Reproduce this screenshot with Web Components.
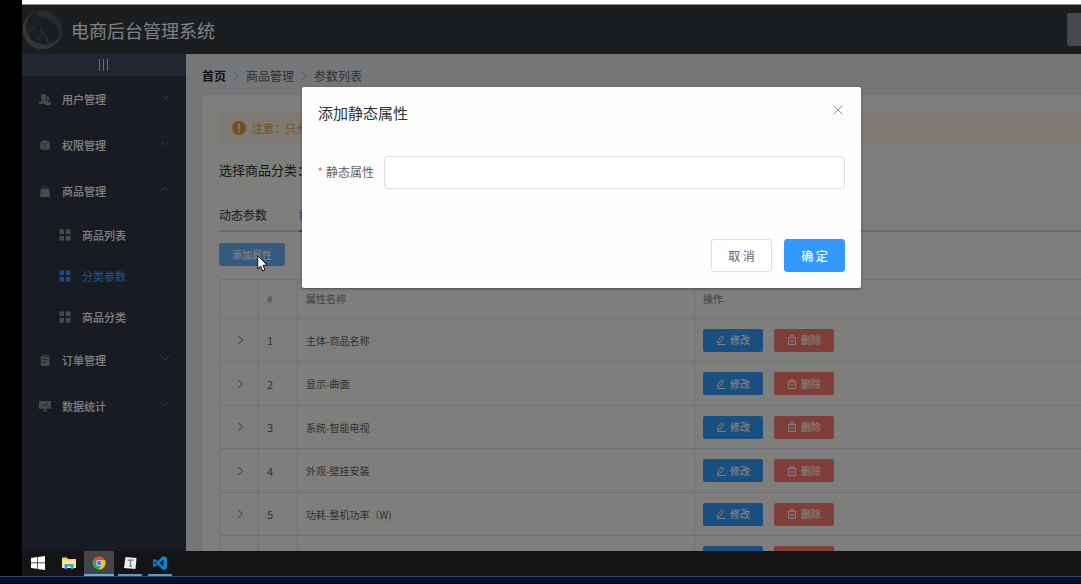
<!DOCTYPE html>
<html lang="zh-CN">
<head>
<meta charset="utf-8">
<title>电商后台管理系统</title>
<style>
html,body{margin:0;height:100%;background:#000}
body{font-family:"Noto Sans CJK SC","Noto Sans",sans-serif;font-size:12px;overflow:hidden}
</style>
</head>
<body>
<desktop-screen></desktop-screen>
<script>
const define = (name, css, html) => customElements.define(name, class extends HTMLElement {
  connectedCallback() {
    if (this.shadowRoot) return;
    const root = this.attachShadow({mode: 'open'});
    const body = typeof html === 'function' ? html(this) : html;
    root.innerHTML = `<style>*{box-sizing:border-box}button{font-family:inherit;cursor:pointer}${css}</style>${body}`;
  }
});

const icons = {
  user: '<path d="M5 1c2 0 3 1.400 3 3.200S7.200 7 6.500 7.800c0 .8.400 1 1.200 1.300L8 9.400V12H0c0-2 .6-2.400 3-3 .5-.2.6-.6.4-1.200C2.500 7 2 5.800 2 4.200 2 2.400 3 1 5 1z"/><path d="M8.300 3.200c1.600-.2 2.600.8 2.600 2.400 0 1.400-.6 2.300-1.200 2.800 0 .8.500 1 1.500 1.300 1.300.4 1.800 1 1.800 3.300H6.500l1-3.400c.8-.8 1.300-4 .8-6.400z"/>',
  box: '<path d="M1.300 3.200 6.500 1l5.200 2.200v7.200l-5.200 2-5.200-2z"/><path d="m1.600 3.700 4.900 1.800 4.900-1.800M6.500 5.500V12" fill="none" stroke="#333744" stroke-width=".6"/>',
  bag: '<path d="M2 4h9l1 9H1z"/><path d="M4 6V3.500C4 .8 9 .8 9 3.500V6" fill="none" stroke="currentColor"/>',
  grid: '<path d="M.5.500h5v5h-5zM7.500.500h5v5h-5zM.5 7.500h5v5h-5zM7.500 7.500h5v5h-5z"/>',
  order: '<path d="M2 2h2.500V.800h4V2H11v11H2z"/><path d="M4 2.800h5M4 6h5M4 9h3.500" stroke="#333744" stroke-width=".9"/>',
  chart: '<path d="M0 1h13v8.500H0zM6 9.500h1V13H6z"/><path d="M3.500 12.500 6.500 10l3 2.500" fill="none" stroke="currentColor"/><path d="m3 6.500 2-2L7 6l3-3M9 7h1.500" fill="none" stroke="#333744" stroke-width=".9"/>'
};

define('menu-item', `
:host{display:block}
button{display:flex;align-items:center;width:100%;height:46px;padding:0 16px 0 17px;border:0;background:none;color:#fff;font-size:11px;line-height:16px;font-weight:500;text-align:left}
svg.icon{width:12px;height:12px;margin-right:11px;color:#909399;fill:currentColor;flex:none}
span{flex:1}
svg.arrow{width:10px;height:6px;margin-bottom:4px;fill:none;stroke:#6d7177}
:host([open]) svg.arrow{transform:rotate(180deg)}
:host([sub]) button{height:41px;padding-left:37px}
:host([sub]) .arrow{display:none}
:host([current]) button,:host([current]) svg.icon{color:#329aff}
`, el => `<button><svg class="icon" viewBox="0 0 13 13" aria-hidden="true">${icons[el.getAttribute('icon')]}</svg><span><slot></slot></span><svg class="arrow" viewBox="0 0 10 6" aria-hidden="true"><path d="m1 1 4 4 4-4"/></svg></button><slot name="children"></slot>`);

define('side-menu', `
:host{display:block;background:#333744;width:164px;flex:none}
.toggle{display:block;width:100%;height:22px;border:0;padding:0;background:#434f62;line-height:0}
svg{width:10px;height:12px;stroke:#d9dde3;stroke-width:1}
`, `
<button class="toggle" aria-label="折叠菜单"><svg viewBox="0 0 10 12"><path d="M.5 0v12M4.500 0v12M8.500 0v12"/></svg></button>
<nav>
<menu-item icon="user">用户管理</menu-item>
<menu-item icon="box">权限管理</menu-item>
<menu-item icon="bag" open>商品管理
<menu-item slot="children" sub icon="grid">商品列表</menu-item>
<menu-item slot="children" sub icon="grid" current>分类参数</menu-item>
<menu-item slot="children" sub icon="grid">商品分类</menu-item>
</menu-item>
<menu-item icon="order">订单管理</menu-item>
<menu-item icon="chart">数据统计</menu-item>
</nav>`);

define('app-header', `
:host{display:flex;align-items:center;height:49px;flex:none;padding-right:14px;background:#373d41;color:#fff}
.logo{width:41px;height:41px;margin-right:8px}
h1{margin:0;font-size:18px;font-weight:400;flex:1}
button{width:59px;height:33px;border:0;border-radius:3px;background:#909399}
`, `
<svg class="logo" viewBox="0 0 41 41" aria-hidden="true">
<path d="M13 2C3 7-2 17 2 27s14 16 25 12c7-3 12-9 13-15-4 8-12 13-20 11C10 34 4 27 4 18 4 11 8 5 13 2z" fill="#666c70"/>
<path d="M14 3c5-2 12-2 17 2s9 9 9 15-1 10-4 14c2-8 1-14-2-19l-2 1 0-3-3 0 0-3-3 1-1-3-3 2-2-3-3 2z" fill="#50565a"/>
<path d="M6 28c0-6 3-9 8-11M19 18l1 7-5 6M20 24l5 5 1 5" fill="none" stroke="#666c70" stroke-width="1"/>
</svg>
<h1>电商后台管理系统</h1><button aria-label="退出"></button>`);

define('bread-crumb', `
:host{display:block}
ol{display:flex;align-items:center;gap:8px;margin:0;padding:0;list-style:none;height:18px;line-height:18px;font-size:12px;color:#606266}
li{display:flex;align-items:center;gap:8px}
a{color:inherit;text-decoration:none}
li:first-child a{color:#202226;font-weight:700}
svg{width:4px;height:8px;fill:none;stroke:#b4b8c0}
`, `
<ol><li><a href="#home">首页</a><svg viewBox="0 0 4 8"><path d="M0 0l4 4-4 4"/></svg></li>
<li><a href="#goods">商品管理</a><svg viewBox="0 0 4 8"><path d="M0 0l4 4-4 4"/></svg></li>
<li><span>参数列表</span></li></ol>`);

define('action-button', `
:host{display:inline-block}
button{display:flex;align-items:center;justify-content:center;gap:4px;width:60px;height:23px;border:0;border-radius:2px;padding:0;background:#34a0ff;color:#fff;font-size:10px;line-height:14px;font-weight:500}
:host([kind=danger]) button{background:#ff7c6e}
:host([kind=add]) button{width:66px;background:#66b4ff}
svg{width:10px;height:10px;fill:none;stroke:currentColor;stroke-width:1}
`, el => {
  const k = el.getAttribute('kind');
  const edit = '<svg viewBox="0 0 10 10"><path d="M1.500 8 2 5.500 5.500 1l2 1.500L4 7.500zM1 9.500h8.500"/></svg>';
  const del = '<svg viewBox="0 0 10 10"><path d="M.5 2.500h9M3.500 2V.500h3V2M1.500 2.500v7h7v-7M4 4.500v3M6 4.500v3"/></svg>';
  return `<button>${k === 'add' ? '' : k === 'danger' ? del : edit}<span><slot></slot></span></button>`;
});

const rows = ['主体-商品名称', '显示-曲面', '系统-智能电视', '外观-壁挂安装', '功耗-整机功率（W)', ''];
define('params-table', `
:host{display:block;margin-top:13px}
table{width:100%;table-layout:fixed;border-collapse:separate;border-spacing:0;border-top:1px solid #e2e5ef;border-left:1px solid #e2e5ef;font-size:10px;color:#606266}
th,td{height:43px;padding:0 0 0 8px;text-align:left;font-weight:400;border:0 solid #e2e5ef;border-width:0 1px 1px 0;white-space:nowrap}
tr:nth-child(even) td{height:44px}
th{height:39px;padding-bottom:2px;font-weight:500;color:#909399}
.c{width:39px}.n{width:397px}
td:nth-child(2){font-size:11px}
.expand{display:flex;width:24px;height:24px;padding:0;border:0;background:none;align-items:center;justify-content:center}
.expand svg{width:5px;height:8px;fill:none;stroke:#666}
.acts{display:flex;gap:11px}
`, `
<table><thead><tr><th class="c"></th><th class="c">#</th><th class="n">属性名称</th><th>操作</th></tr></thead>
<tbody>${rows.map((n, i) => `<tr><td><button class="expand" aria-label="展开"><svg viewBox="0 0 5 8"><path d="m.5 0 4 4-4 4"/></svg></button></td><td>${n && i + 1}</td><td>${n}</td><td><div class="acts"><action-button>${n && '修改'}</action-button><action-button kind="danger">${n && '删除'}</action-button></div></td></tr>`).join('')}</tbody></table>`);

define('params-page', `
:host{display:block;flex:1;min-width:0;padding:13px 16px 0;background:#eaedf1}
.card{margin-top:10px;padding:17px 17px 0;background:#fcfff9;border-radius:3px;box-shadow:0 1px 3px rgba(0,0,0,.12)}
.alert{display:flex;align-items:center;gap:6px;height:31px;padding:0 13px;border-radius:3px;background:#fdf3e4;color:#e6a23c;font-size:11px}
.alert svg{width:14px;height:14px}
.pick{margin:15px 0 0;height:24px;line-height:24px;font-size:13px;color:#303133}
.tabs{display:flex;gap:32px;height:33px;margin-top:17px;border-bottom:2px solid #d0d4dc}
.tabs button{padding:0;border:0;border-bottom:2px solid transparent;height:33px;background:none;font-size:12px;color:#303133}
.tabs button.on{color:#3a9cff;border-color:#3a9cff}
.add{margin-top:11px}
action-button{vertical-align:top}
`, `
<bread-crumb></bread-crumb>
<section class="card">
<div class="alert" role="alert"><svg viewBox="0 0 14 14"><circle cx="7" cy="7" r="7" fill="#e6a23c"/><path d="M7 2.500v6" stroke="#fdf3e4" stroke-width="2"/><circle cx="7" cy="10.800" r="1.100" fill="#fdf3e4"/></svg>注意：只允</div>
<p class="pick">选择商品分类：</p>
<div class="tabs" role="tablist"><button role="tab">动态参数</button><button role="tab" class="on">静态属性</button></div>
<div class="add"><action-button kind="add">添加属性</action-button></div>
<params-table></params-table>
</section>`);

define('form-dialog', `
:host{display:block;position:absolute;inset:0;background:rgba(0,0,0,.5)}
section{width:50%;margin:82px 0 0 280px;padding:15px 16px 16px;background:#fdfefd;border-radius:2px;box-shadow:0 1px 3px rgba(0,0,0,.4);color:#606266}
header{display:flex;align-items:flex-start;justify-content:space-between;height:54px}
h2{margin:0;font-size:15px;line-height:22px;font-weight:400;color:#303133}
.close{width:14px;height:14px;margin-top:1px;padding:2px;border:0;background:none;line-height:0}
.close svg{width:10px;height:10px;stroke:#909399}
.field{display:grid;grid-template-columns:56px 1fr;align-items:center;gap:10px}
label{justify-self:end;font-size:12px;line-height:18px;padding-bottom:2px;white-space:nowrap}
label::before{content:"*";color:#f56c6c;margin-right:3px}
input{width:100%;height:33px;border:1px solid #dcdfe6;border-radius:4px;background:#fff;padding:0 12px;font:inherit;outline:0}
footer{display:flex;justify-content:flex-end;gap:12px;margin-top:50px}
footer button{width:61px;height:33px;padding:0;border:1px solid #dcdfe6;border-radius:3px;background:#fff;color:#606266;font-size:12px}
footer .ok{background:#3399ff;border-color:#3399ff;color:#fff;font-weight:500}
`, `
<section role="dialog" aria-labelledby="t"><header><h2 id="t">添加静态属性</h2><button class="close" aria-label="关闭"><svg viewBox="0 0 10 10"><path d="m.5.500 9 9M9.500.500l-9 9"/></svg></button></header>
<div class="field"><label for="attr">静态属性</label><input id="attr" type="text"></div>
<footer><button>取 消</button><button class="ok">确 定</button></footer></section>`);

define('task-bar', `
:host{display:flex;height:25px;flex:none;background:#121415}
button{display:flex;align-items:center;justify-content:center;width:30px;height:25px;padding:0;border:0;border-bottom:2px solid transparent;background:none}
button:nth-child(2){margin:0 1px}
.active{background:#434546;border-color:#69acd8}
.run{width:24px;margin-left:4px;border-color:#5c9dc8}
.run + .run{margin-left:6px}
svg{width:14px;height:14px}
`, `
<button aria-label="开始"><svg viewBox="0 0 14 14" fill="#fff"><path d="M0 2l6-.9v5.500H0zM6.700 1 14 0v6.600H6.700zM0 7.300h6v5.500L0 12zM6.700 7.300H14V14l-7.300-1z"/></svg></button>
<button aria-label="文件"><svg viewBox="0 0 14 14"><path d="M0 1.500h5l1 1.500h8v9H0z" fill="#f7d266"/><path d="M0 4.500h14V12H0z" fill="#ffe594"/><path d="M2.500 13V8h9v5H9v-2.500H5V13z" fill="#3ba5dc"/></svg></button>
<button class="active" aria-label="Chrome"><svg viewBox="0 0 14 14"><circle cx="7" cy="7" r="6.500" fill="#33a852"/><path d="M1.400 3.700A6.500 6.500 0 0 1 12.700 3.900H7L4.300 8.500z" fill="#ea4335"/><path d="M12.700 3.900A6.500 6.500 0 0 1 6.800 13.500L9.800 8.500 9.500 3.900z" fill="#fbc116"/><circle cx="7" cy="7" r="3.100" fill="#fff"/><circle cx="7" cy="7" r="2.500" fill="#4285f4"/></svg></button>
<button class="run" aria-label="Typora"><svg viewBox="0 0 14 14"><path d="M2.500 1 13.500 2 12.500 13 1 12z" fill="#eee"/><path d="M4.500 4.200h6M7.500 4.200v6M6 10.200h3" stroke="#777" stroke-width="1.200"/></svg></button>
<button class="run" aria-label="VS Code"><svg viewBox="0 0 14 14"><path d="M10 0l4 1.500v11L10 14 4.600 8.800 1.500 11 0 10.300V3.700L1.500 3l3.100 2.200zM10.300 3.800 6.500 7l3.800 3.200zM1.500 5v4l2-2z" fill="#0c83d2" fill-rule="evenodd"/></svg></button>`);

define('desktop-screen', `
:host{display:flex;flex-direction:column;height:100vh;background:#000;overflow:hidden}
.top{height:5px;flex:none;margin-left:22px;background:#fbfcfb;border-bottom:1px solid #8b8f8d}
.view{position:relative;flex:1;min-height:0;margin-left:22px;overflow:hidden}
.app{position:relative;display:flex;flex-direction:column;width:calc(100% + 59px);height:100%}
.main{display:flex;flex:1;min-height:0}
task-bar{margin-left:22px}
.strip{height:8px;flex:none;background:#001233;border-top:1px solid #34445a;border-bottom:1px solid #000}
.cursor{position:absolute;left:235px;top:250px;width:12px;height:18px}
`, `
<div class="top"></div>
<div class="view"><div class="app"><app-header></app-header><div class="main"><side-menu></side-menu><params-page></params-page></div><form-dialog></form-dialog></div>
<svg class="cursor" viewBox="0 0 12 18" aria-hidden="true"><path d="M.7.800v13l3-2.700 2 4.900 2.300-1-2-4.800h4.200z" fill="#fff" stroke="#111"/></svg></div>
<task-bar></task-bar><div class="strip"></div>`);
</script>
</body>
</html>
